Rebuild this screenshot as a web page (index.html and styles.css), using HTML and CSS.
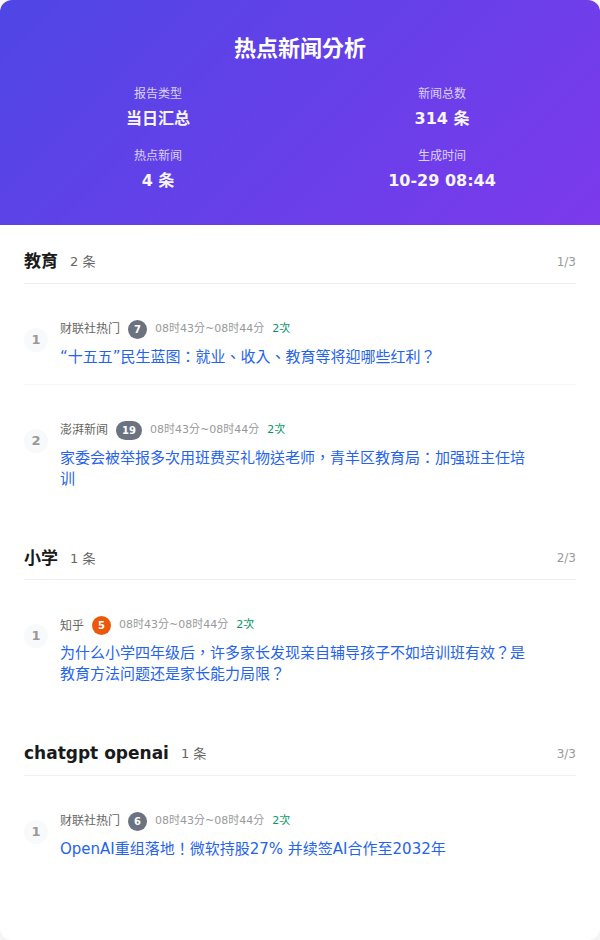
FILE: index.html
```html
<!DOCTYPE html>
<html>
<head>
<meta charset="utf-8">
<title>热点新闻分析</title>
<link rel="stylesheet" href="styles.css">
</head>
<body>
<div class="container">
  <div class="header">
    <div class="header-title">热点新闻分析</div>
    <div class="header-info">
      <div class="info-item"><span class="info-label">报告类型</span><span class="info-value">当日汇总</span></div>
      <div class="info-item"><span class="info-label">新闻总数</span><span class="info-value">314 条</span></div>
      <div class="info-item"><span class="info-label">热点新闻</span><span class="info-value">4 条</span></div>
      <div class="info-item"><span class="info-label">生成时间</span><span class="info-value">10-29 08:44</span></div>
    </div>
  </div>
  <div class="content">
    <div class="word-group">
      <div class="word-header">
        <div class="word-info"><div class="word-name">教育</div><div class="word-count">2 条</div></div>
        <div class="word-index">1/3</div>
      </div>
      <div class="news-item">
        <div class="news-number">1</div>
        <div class="news-content">
          <div class="news-header"><span class="source-name">财联社热门</span><span class="rank-num">7</span><span class="time-info">08时43分~08时44分</span><span class="count-info">2次</span></div>
          <div class="news-title"><a class="news-link">“十五五”民生蓝图：就业、收入、教育等将迎哪些红利？</a></div>
        </div>
      </div>
      <div class="news-item">
        <div class="news-number">2</div>
        <div class="news-content">
          <div class="news-header"><span class="source-name">澎湃新闻</span><span class="rank-num">19</span><span class="time-info">08时43分~08时44分</span><span class="count-info">2次</span></div>
          <div class="news-title"><a class="news-link">家委会被举报多次用班费买礼物送老师，青羊区教育局：加强班主任培训</a></div>
        </div>
      </div>
    </div>
    <div class="word-group">
      <div class="word-header">
        <div class="word-info"><div class="word-name">小学</div><div class="word-count">1 条</div></div>
        <div class="word-index">2/3</div>
      </div>
      <div class="news-item">
        <div class="news-number">1</div>
        <div class="news-content">
          <div class="news-header"><span class="source-name">知乎</span><span class="rank-num high">5</span><span class="time-info">08时43分~08时44分</span><span class="count-info">2次</span></div>
          <div class="news-title"><a class="news-link">为什么小学四年级后，许多家长发现亲自辅导孩子不如培训班有效？是教育方法问题还是家长能力局限？</a></div>
        </div>
      </div>
    </div>
    <div class="word-group">
      <div class="word-header">
        <div class="word-info"><div class="word-name">chatgpt openai</div><div class="word-count">1 条</div></div>
        <div class="word-index">3/3</div>
      </div>
      <div class="news-item">
        <div class="news-number">1</div>
        <div class="news-content">
          <div class="news-header"><span class="source-name">财联社热门</span><span class="rank-num">6</span><span class="time-info">08时43分~08时44分</span><span class="count-info">2次</span></div>
          <div class="news-title"><a class="news-link">OpenAI重组落地！微软持股27% 并续签AI合作至2032年</a></div>
        </div>
      </div>
    </div>
  </div>
</div>
</body>
</html>
```

FILE: styles.css
```css
* { box-sizing: border-box; }
html, body { margin: 0; padding: 0; }
body {
  font-family: "DejaVu Sans", "Noto Sans CJK TC", sans-serif;
  background: #fafafa;
  color: #333;
  line-height: 1.5;
}
.container {
  width: 600px;
  background: #fff;
  border-radius: 12px;
  overflow: hidden;
  box-shadow: 0 2px 16px rgba(0,0,0,0.06);
}
.header {
  background: linear-gradient(135deg, #4f46e5 0%, #7c3aed 100%);
  color: #fff;
  padding: 32px 24px;
  text-align: center;
}
.header-title {
  font-size: 22px;
  font-weight: 700;
  margin: 0 0 20px 0;
}
.header-info {
  display: grid;
  grid-template-columns: 1fr 1fr;
  gap: 16px;
  font-size: 14px;
  opacity: 0.95;
}
.info-item { text-align: center; }
.info-label {
  display: block;
  font-size: 12px;
  opacity: 0.8;
  margin-bottom: 4px;
}
.info-value {
  display: block;
  font-weight: 600;
  font-size: 16px;
}
.content { padding: 24px; }
.word-group { margin-bottom: 40px; }
.word-header {
  display: flex;
  align-items: center;
  justify-content: space-between;
  margin-bottom: 20px;
  padding-bottom: 8px;
  border-bottom: 1px solid #f0f0f0;
}
.word-info { display: flex; align-items: center; gap: 12px; }
.word-name { font-size: 17px; font-weight: 600; color: #1a1a1a; }
.word-count { color: #666; font-size: 13px; font-weight: 400; }
.word-index { color: #999; font-size: 12px; }
.news-item {
  margin-bottom: 20px;
  padding: 16px 0;
  border-bottom: 1px solid #f5f5f5;
  display: flex;
  gap: 12px;
  align-items: center;
}
.news-item:last-child { border-bottom: none; }
.news-number {
  color: #999;
  font-size: 13px;
  font-weight: 600;
  flex-shrink: 0;
  background: #f8f9fa;
  border-radius: 50%;
  width: 24px;
  height: 24px;
  display: flex;
  align-items: center;
  justify-content: center;
  align-self: flex-start;
  margin-top: 8px;
}
.news-content { flex: 1; min-width: 0; padding-right: 40px; }
.news-header {
  display: flex;
  align-items: center;
  gap: 8px;
  margin-bottom: 8px;
  flex-wrap: wrap;
}
.source-name { color: #666; font-size: 12px; font-weight: 400; }
.rank-num {
  color: #fff;
  background: #6b7280;
  font-size: 10px;
  font-weight: 700;
  padding: 2px 6px;
  border-radius: 10px;
  min-width: 18px;
  text-align: center;
}
.rank-num.high { background: #ea580c; }
.time-info { color: #999; font-size: 11px; }
.count-info { color: #059669; font-size: 11px; font-weight: 400; }
.news-title { font-size: 15px; line-height: 1.4; color: #1a1a1a; margin: 0; }
.news-link { color: #2563eb; text-decoration: none; }
```
